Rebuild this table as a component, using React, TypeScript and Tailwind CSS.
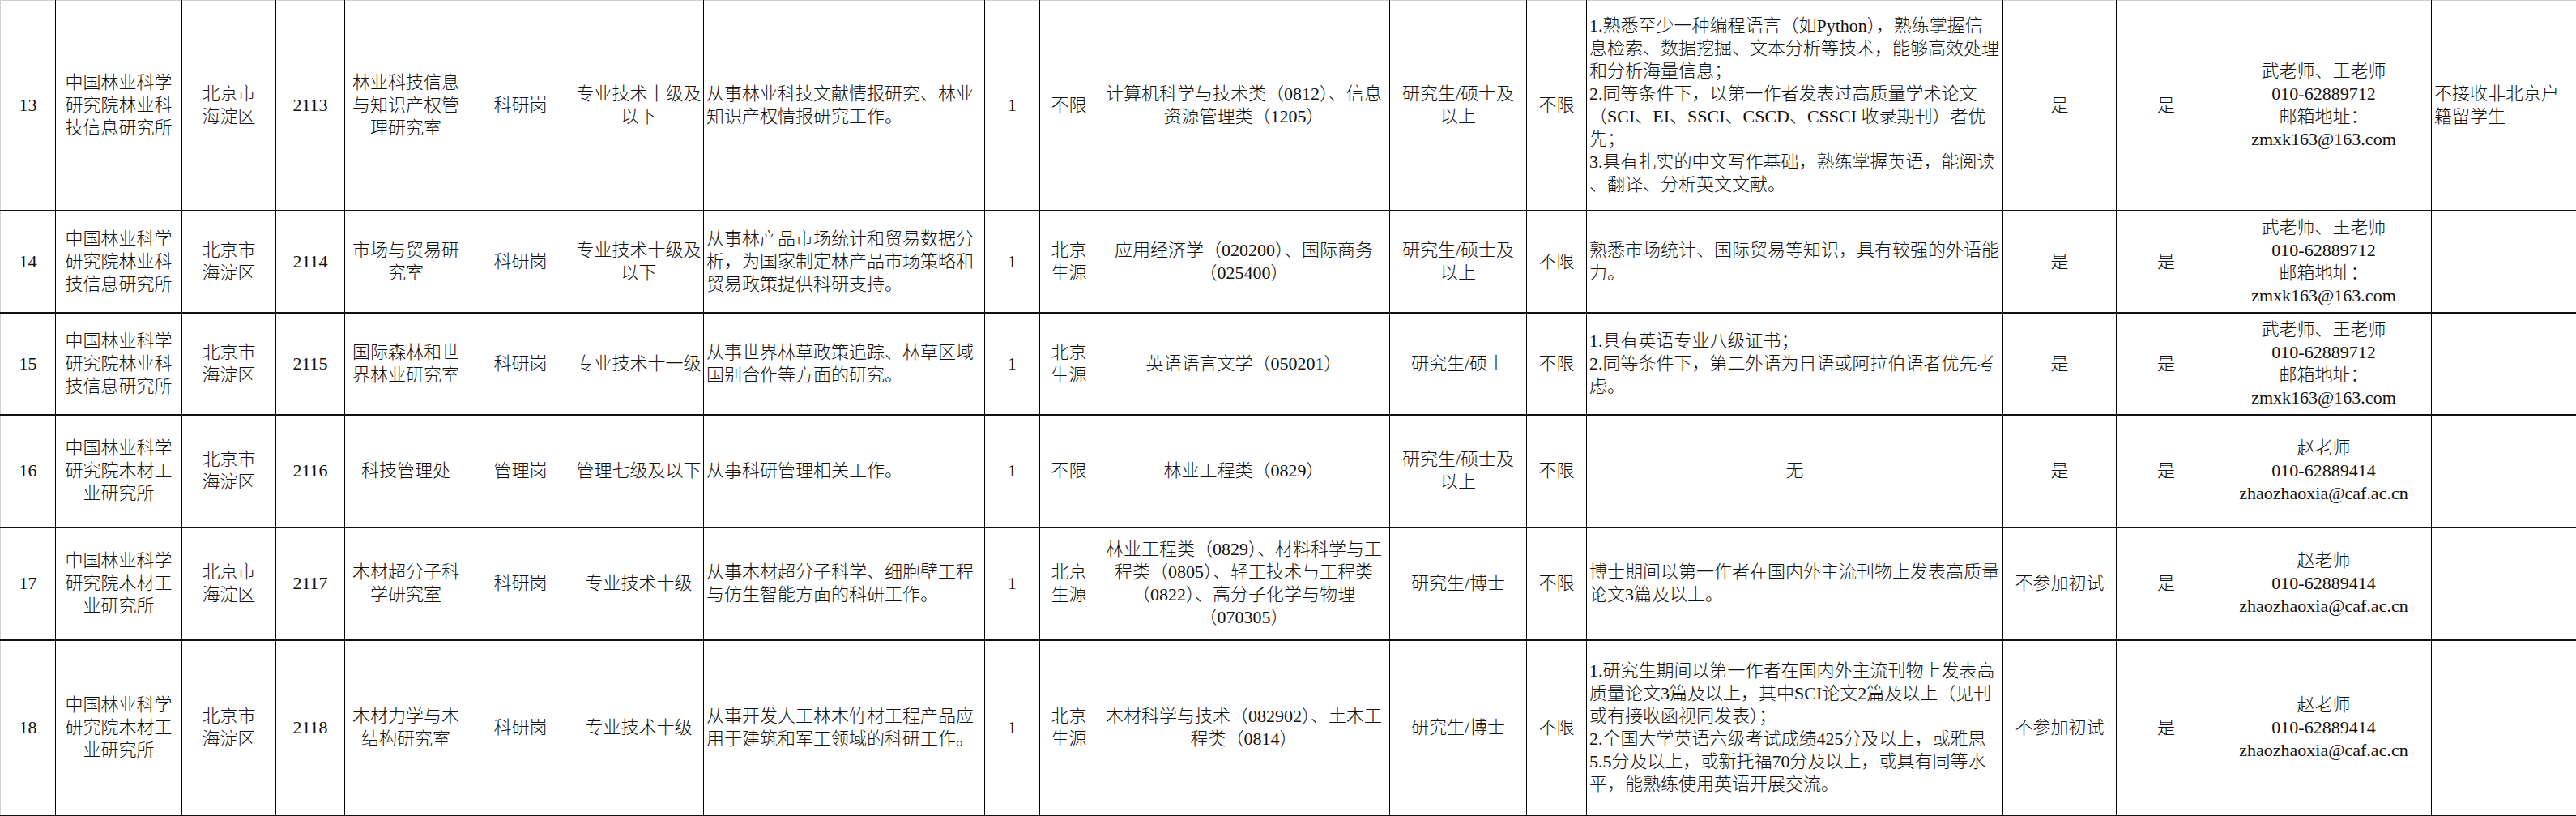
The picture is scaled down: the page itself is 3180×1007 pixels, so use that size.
import React from 'react';

type Align = 'left' | 'center';
type Cell = string[] | { lines: string[]; align: Align };

// column widths, left to right
const cols = [
  'w-[68px]',
  'w-[156px]',
  'w-[116px]',
  'w-[85px]',
  'w-[151px]',
  'w-[132px]',
  'w-[160px]',
  'w-[347px]',
  'w-[68px]',
  'w-[72px]',
  'w-[360px]',
  'w-[169px]',
  'w-[74px]',
  'w-[514px]',
  'w-[140px]',
  'w-[123px]',
  'w-[266px]',
  'w-[179px]',
];

const leftCols = new Set([7, 13, 17]);

const rowHeights = ['h-[259px]', 'h-[126px]', 'h-[126px]', 'h-[139px]', 'h-[139px]', 'h-[217px]'];

const infoUnit = ['中国林业科学', '研究院林业科', '技信息研究所'];
const woodUnit = ['中国林业科学', '研究院木材工', '业研究所'];
const haidian = ['北京市', '海淀区'];
const wuWang = ['武老师、王老师', '010-62889712', '邮箱地址：', 'zmxk163@163.com'];
const zhao = ['赵老师', '010-62889414', 'zhaozhaoxia@caf.ac.cn'];
const bjSource = ['北京', '生源'];

const rows: Cell[][] = [
  [
    ['13'],
    infoUnit,
    haidian,
    ['2113'],
    ['林业科技信息', '与知识产权管', '理研究室'],
    ['科研岗'],
    ['专业技术十级及', '以下'],
    ['从事林业科技文献情报研究、林业', '知识产权情报研究工作。'],
    ['1'],
    ['不限'],
    ['计算机科学与技术类（0812）、信息', '资源管理类（1205）'],
    ['研究生/硕士及', '以上'],
    ['不限'],
    [
      '1.熟悉至少一种编程语言（如Python），熟练掌握信',
      '息检索、数据挖掘、文本分析等技术，能够高效处理',
      '和分析海量信息；',
      '2.同等条件下，以第一作者发表过高质量学术论文',
      '（SCI、EI、SSCI、CSCD、CSSCI 收录期刊）者优',
      '先；',
      '3.具有扎实的中文写作基础，熟练掌握英语，能阅读',
      '、翻译、分析英文文献。',
    ],
    ['是'],
    ['是'],
    wuWang,
    ['不接收非北京户', '籍留学生'],
  ],
  [
    ['14'],
    infoUnit,
    haidian,
    ['2114'],
    ['市场与贸易研', '究室'],
    ['科研岗'],
    ['专业技术十级及', '以下'],
    ['从事林产品市场统计和贸易数据分', '析，为国家制定林产品市场策略和', '贸易政策提供科研支持。'],
    ['1'],
    bjSource,
    ['应用经济学（020200）、国际商务', '（025400）'],
    ['研究生/硕士及', '以上'],
    ['不限'],
    ['熟悉市场统计、国际贸易等知识，具有较强的外语能', '力。'],
    ['是'],
    ['是'],
    wuWang,
    [],
  ],
  [
    ['15'],
    infoUnit,
    haidian,
    ['2115'],
    ['国际森林和世', '界林业研究室'],
    ['科研岗'],
    ['专业技术十一级'],
    ['从事世界林草政策追踪、林草区域', '国别合作等方面的研究。'],
    ['1'],
    bjSource,
    ['英语语言文学（050201）'],
    ['研究生/硕士'],
    ['不限'],
    ['1.具有英语专业八级证书；', '2.同等条件下，第二外语为日语或阿拉伯语者优先考', '虑。'],
    ['是'],
    ['是'],
    wuWang,
    [],
  ],
  [
    ['16'],
    woodUnit,
    haidian,
    ['2116'],
    ['科技管理处'],
    ['管理岗'],
    ['管理七级及以下'],
    ['从事科研管理相关工作。'],
    ['1'],
    ['不限'],
    ['林业工程类（0829）'],
    ['研究生/硕士及', '以上'],
    ['不限'],
    { lines: ['无'], align: 'center' },
    ['是'],
    ['是'],
    zhao,
    [],
  ],
  [
    ['17'],
    woodUnit,
    haidian,
    ['2117'],
    ['木材超分子科', '学研究室'],
    ['科研岗'],
    ['专业技术十级'],
    ['从事木材超分子科学、细胞壁工程', '与仿生智能方面的科研工作。'],
    ['1'],
    bjSource,
    ['林业工程类（0829）、材料科学与工', '程类（0805）、轻工技术与工程类', '（0822）、高分子化学与物理', '（070305）'],
    ['研究生/博士'],
    ['不限'],
    ['博士期间以第一作者在国内外主流刊物上发表高质量', '论文3篇及以上。'],
    ['不参加初试'],
    ['是'],
    zhao,
    [],
  ],
  [
    ['18'],
    woodUnit,
    haidian,
    ['2118'],
    ['木材力学与木', '结构研究室'],
    ['科研岗'],
    ['专业技术十级'],
    ['从事开发人工林木竹材工程产品应', '用于建筑和军工领域的科研工作。'],
    ['1'],
    bjSource,
    ['木材科学与技术（082902）、土木工', '程类（0814）'],
    ['研究生/博士'],
    ['不限'],
    [
      '1.研究生期间以第一作者在国内外主流刊物上发表高',
      '质量论文3篇及以上，其中SCI论文2篇及以上（见刊',
      '或有接收函视同发表）；',
      '2.全国大学英语六级考试成绩425分及以上，或雅思',
      '5.5分及以上，或新托福70分及以上，或具有同等水',
      '平，能熟练使用英语开展交流。',
    ],
    ['不参加初试'],
    ['是'],
    zhao,
    [],
  ],
];

function TableCell({ cell, col, first }: { cell: Cell; col: number; first: boolean }) {
  const lines = Array.isArray(cell) ? cell : cell.lines;
  const align: Align = Array.isArray(cell) ? (leftCols.has(col) ? 'left' : 'center') : cell.align;
  return (
    <td
      className={`border-x border-b-2 border-black border-b-[#111] p-0 align-middle ${
        first ? 'border-t border-t-[#cfcfcf]' : ''
      } ${col === 0 ? 'border-l-[#cfcfcf]' : ''} ${
        align === 'left' ? 'pl-[3px] text-left' : 'text-center'
      }`}
    >
      {lines.map((l, i) => (
        <div key={i} className="whitespace-nowrap">
          {l}
        </div>
      ))}
    </td>
  );
}

export default function App() {
  return (
    <div className="h-[1007px] w-[3180px] overflow-hidden bg-white">
      <table className="w-[3180px] table-fixed border-collapse font-['Liberation_Serif','Noto_Sans_CJK_SC',serif] text-[22px] font-light leading-[28px] text-[#111]">
        <colgroup>
          {cols.map((c, i) => (
            <col key={i} className={c} />
          ))}
        </colgroup>
        <tbody>
          {rows.map((r, ri) => (
            <tr key={ri} className={rowHeights[ri]}>
              {r.map((cell, ci) => (
                <TableCell key={ci} cell={cell} col={ci} first={ri === 0} />
              ))}
            </tr>
          ))}
        </tbody>
      </table>
    </div>
  );
}
